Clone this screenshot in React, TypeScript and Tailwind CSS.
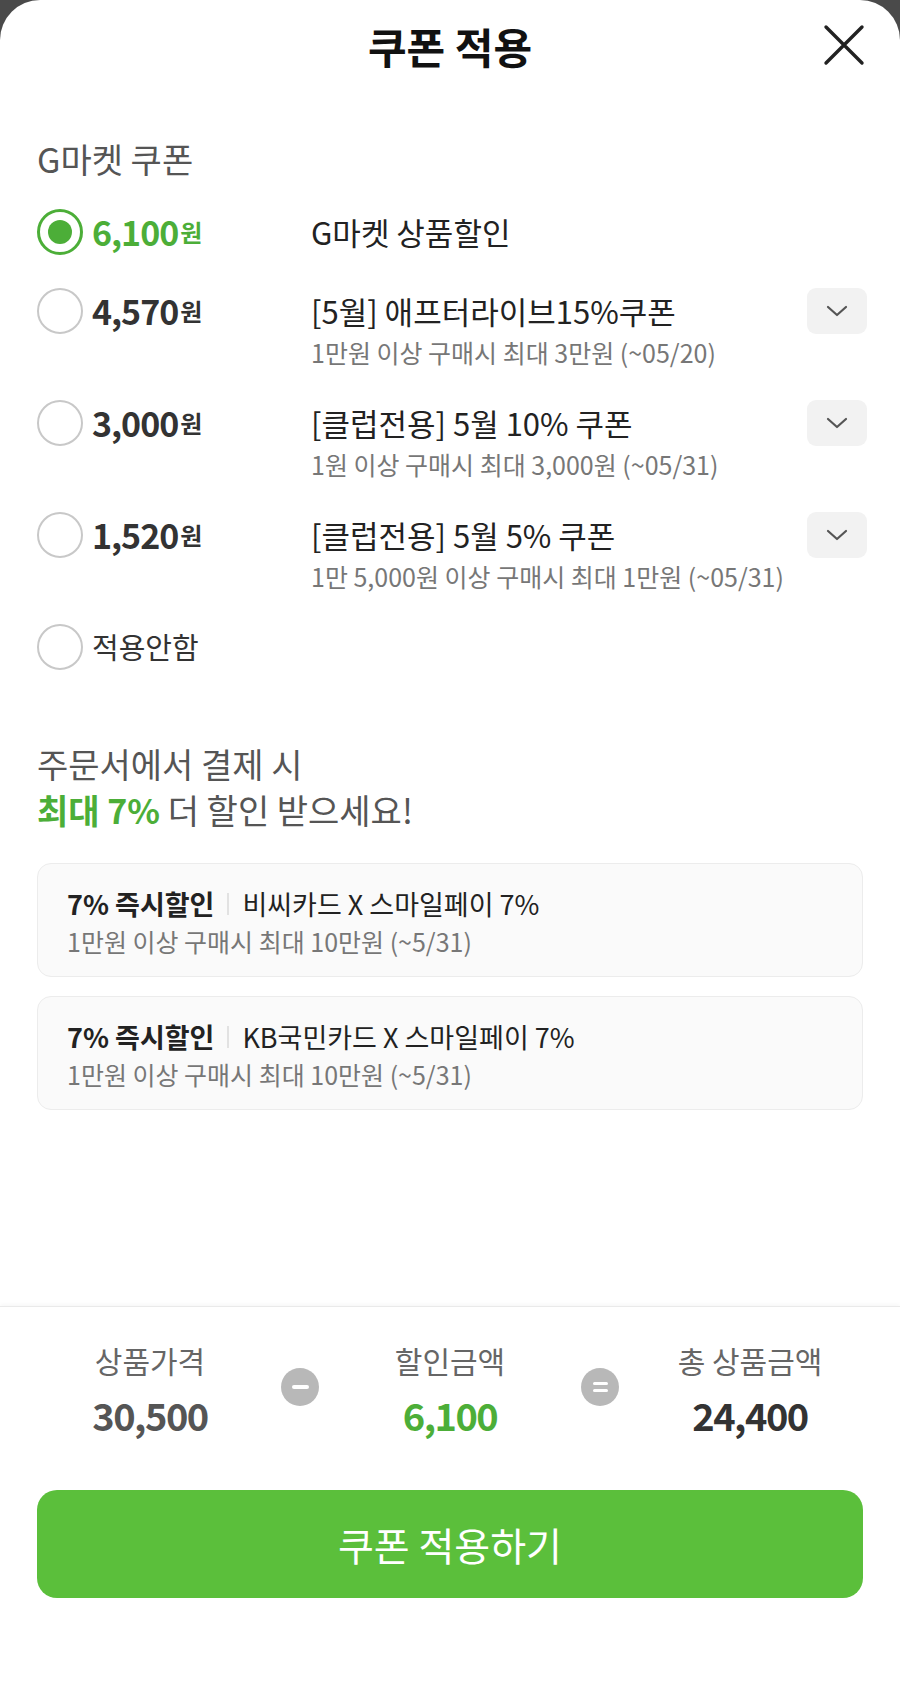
import React from "react";

const font = { fontFamily: '"Noto Sans CJK KR", "Noto Sans", sans-serif' };

type Coupon = {
  amount: string;
  title: string;
  desc?: string;
  expandable?: boolean;
};

const coupons: Coupon[] = [
  { amount: "6,100", title: "G마켓 상품할인" },
  {
    amount: "4,570",
    title: "[5월] 애프터라이브15%쿠폰",
    desc: "1만원 이상 구매시 최대 3만원 (~05/20)",
    expandable: true,
  },
  {
    amount: "3,000",
    title: "[클럽전용] 5월 10% 쿠폰",
    desc: "1원 이상 구매시 최대 3,000원 (~05/31)",
    expandable: true,
  },
  {
    amount: "1,520",
    title: "[클럽전용] 5월 5% 쿠폰",
    desc: "1만 5,000원 이상 구매시 최대 1만원 (~05/31)",
    expandable: true,
  },
];

const cards = [
  { name: "비씨카드 X 스마일페이 7%", desc: "1만원 이상 구매시 최대 10만원 (~5/31)" },
  { name: "KB국민카드 X 스마일페이 7%", desc: "1만원 이상 구매시 최대 10만원 (~5/31)" },
];

const Radio: React.FC<{ checked?: boolean }> = ({ checked }) => (
  <span
    className={`flex h-[46px] w-[46px] shrink-0 items-center justify-center rounded-full ${
      checked ? "border-[3px] border-[#4cae38]" : "border-2 border-[#c8c8c8]"
    }`}
  >
    {checked && <span className="h-[24px] w-[24px] rounded-full bg-[#4cae38]" />}
  </span>
);

const Chevron = () => (
  <svg width="22" height="12" viewBox="0 0 22 12" fill="none">
    <path d="M2 2l9 8 9-8" stroke="#555" strokeWidth="2.2" strokeLinecap="round" strokeLinejoin="round" />
  </svg>
);

const CouponRow: React.FC<{ coupon: Coupon; checked?: boolean }> = ({ coupon, checked }) => (
  <div className="flex items-start">
    <Radio checked={checked} />
    <div
      className={`ml-[9px] flex h-[46px] w-[219px] shrink-0 items-center font-bold tracking-[-1px] ${
        checked ? "text-[#4cae38]" : "text-[#333]"
      }`}
    >
      <span className="text-[34px] leading-none">{coupon.amount}</span>
      <span className="ml-[2px] text-[24px] leading-none">원</span>
    </div>
    <div className="min-w-0 flex-1">
      <div className="flex h-[46px] items-center text-[31px] text-[#222]">{coupon.title}</div>
      {coupon.desc && (
        <div className="mt-[3px] text-[25px] leading-[30px] text-[#777]">{coupon.desc}</div>
      )}
    </div>
    {coupon.expandable && (
      <button className="mr-[-4px] flex h-[46px] w-[60px] shrink-0 items-center justify-center rounded-[9px] bg-[#f2f2f2]">
        <Chevron />
      </button>
    )}
  </div>
);

const OpCircle: React.FC<{ sign: "minus" | "equal" }> = ({ sign }) => (
  <div className="relative z-10 -mx-[19px] flex h-[38px] w-[38px] shrink-0 items-center justify-center rounded-full bg-[#b8b8b8]">
    {sign === "minus" ? (
      <span className="h-[4px] w-[17px] rounded-full bg-white" />
    ) : (
      <span className="flex flex-col gap-[4px]">
        <span className="h-[3px] w-[15px] rounded-full bg-white" />
        <span className="h-[3px] w-[15px] rounded-full bg-white" />
      </span>
    )}
  </div>
);

const App: React.FC = () => {
  return (
    <div className="min-h-screen w-[900px] bg-[#4a4a4a]" style={font}>
      <div className="flex h-[1696px] flex-col rounded-tl-[40px] rounded-tr-[40px] bg-white">
        <header className="grid h-[90px] grid-cols-[1fr_auto_1fr] items-center px-[35px]">
          <div />
          <h1 className="text-[42px] font-semibold text-[#111]">쿠폰 적용</h1>
          <div className="flex justify-end">
            <svg width="42" height="42" viewBox="0 0 42 42" fill="none">
              <path d="M3 3l36 36M39 3L3 39" stroke="#222" strokeWidth="3.4" strokeLinecap="round" />
            </svg>
          </div>
        </header>

        <main className="flex-1 px-[37px]">
          <h2 className="mt-[48px] text-[34px] leading-[42px] text-[#555]">G마켓 쿠폰</h2>

          <div className="mt-[29px] flex flex-col gap-[33px]">
            {coupons.map((c, i) => (
              <CouponRow key={c.amount} coupon={c} checked={i === 0} />
            ))}
            <div className="flex items-center">
              <Radio />
              <span className="ml-[9px] text-[29px] text-[#333]">적용안함</span>
            </div>
          </div>

          <div className="mt-[71px] text-[34px] leading-[46px] text-[#555]">
            <p>주문서에서 결제 시</p>
            <p>
              <span className="font-bold text-[#4cae38]">최대 7%</span> 더 할인 받으세요!
            </p>
          </div>

          <div className="mt-[30px] flex flex-col gap-[19px]">
            {cards.map((card) => (
              <div
                key={card.name}
                className="h-[114px] rounded-[14px] border border-[#ececec] bg-[#fafafa] px-[29px] pt-[21px]"
              >
                <div className="flex items-center text-[27px] leading-[38px] text-[#222]">
                  <span className="font-bold">7% 즉시할인</span>
                  <span className="mx-[13px] h-[22px] w-[2px] bg-[#e2e2e2]" />
                  <span>{card.name}</span>
                </div>
                <div className="mt-[1px] text-[25px] leading-[34px] text-[#777]">{card.desc}</div>
              </div>
            ))}
          </div>
        </main>

        <footer className="h-[390px] border-t border-[#eaeaea] shadow-[0_-2px_4px_rgba(0,0,0,0.03)]">
          <div className="flex items-center pt-[32px]">
            <div className="flex w-[300px] flex-col items-center">
              <span className="text-[30px] leading-[42px] text-[#666]">상품가격</span>
              <span className="mt-[14px] text-[38px] font-bold leading-[40px] tracking-[-1.5px] text-[#555]">
                30,500
              </span>
            </div>
            <OpCircle sign="minus" />
            <div className="flex w-[300px] flex-col items-center">
              <span className="text-[30px] leading-[42px] text-[#666]">할인금액</span>
              <span className="mt-[14px] text-[38px] font-bold leading-[40px] tracking-[-1.5px] text-[#4cae38]">
                6,100
              </span>
            </div>
            <OpCircle sign="equal" />
            <div className="flex w-[300px] flex-col items-center">
              <span className="text-[30px] leading-[42px] text-[#666]">총 상품금액</span>
              <span className="mt-[14px] text-[38px] font-bold leading-[40px] tracking-[-1.5px] text-[#333]">
                24,400
              </span>
            </div>
          </div>

          <div className="px-[37px]">
            <button className="mt-[55px] flex h-[108px] w-full items-center justify-center rounded-[20px] bg-[#5bbf3b] text-[39px] text-white">
              쿠폰 적용하기
            </button>
          </div>
        </footer>
      </div>
    </div>
  );
};

export default App;
